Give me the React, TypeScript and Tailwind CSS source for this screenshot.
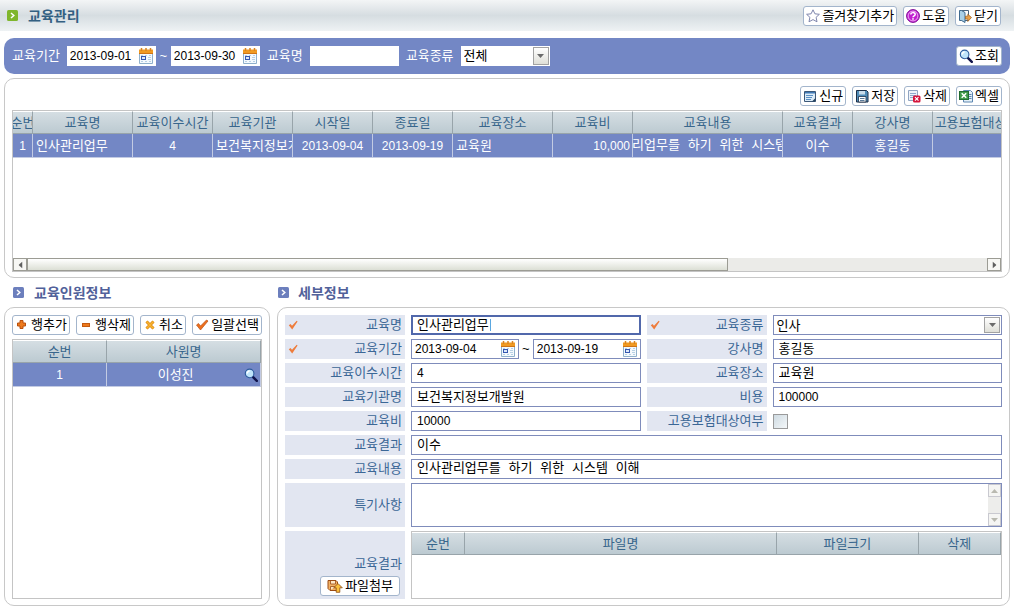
import React from "react";

type IconProps = { className?: string };

const StarIcon = () => (
  <svg viewBox="0 0 14 14" className="size-3.5 shrink-0">
    <path d="M7 .8 8.900 4.800l4.500.5-3.300 3 .9 4.500L7 10.600l-4 2.200.9-4.500-3.300-3 4.500-.5Z" fill="#fff" stroke="#7f86ad" />
  </svg>
);

const HelpIcon = () => (
  <svg viewBox="0 0 14 14" className="size-3.5 shrink-0">
    <circle cx="7" cy="7" r="6.400" fill="#c21fd0" stroke="#7d0f94" />
    <circle cx="7" cy="7" r="4.900" fill="none" stroke="#f3b9f7" strokeWidth=".9" />
    <path d="M4.800 5.600C4.800 3 9.300 3 9.200 5.400 9.200 6.900 7 6.800 7 8.300" fill="none" stroke="#fff" strokeWidth="1.500" />
    <rect x="6.200" y="9.200" width="1.600" height="1.500" fill="#fff" />
  </svg>
);

const CloseIcon = () => (
  <svg viewBox="0 0 14 14" className="size-3.5 shrink-0">
    <path d="M3.500 1.500h7v10h-7Z" fill="#fff" stroke="#49637f" />
    <path d="M1.500 1.500h2l3.500 2v10l-3.500-2h-2Z" fill="#a9d0e8" stroke="#3f6a8f" />
    <path d="M13.500 8.500 9.800 5.200v2H7.500v2.900h2.300v2.400Z" fill="#e8a04a" stroke="#9a5b1b" strokeWidth=".7" />
  </svg>
);

const SearchIcon = ({ className = "" }: IconProps) => (
  <svg viewBox="0 0 14 14" className={`size-3.5 shrink-0 ${className}`}>
    <path d="m8.600 8.600 4.200 4.200" stroke="#10134a" strokeWidth="2.400" strokeLinecap="round" />
    <circle cx="5.600" cy="5.400" r="4.300" fill="#bfe4fa" stroke="#2d5a9c" strokeWidth="1.100" />
    <path d="M3.200 5.400A2.400 2.400 0 0 1 5.600 3" stroke="#fff" strokeWidth="1.500" fill="none" />
  </svg>
);

const NewIcon = () => (
  <svg viewBox="0 0 14 14" className="size-3.5 shrink-0">
    <path d="M1.500 2.500h11v10h-11Z" fill="#dcecf8" stroke="#3c5878" />
    <path d="M2 3h10v1.500H2Z" fill="#3f78b4" />
    <path d="M3 6.500h7M3 8.500h6M3 10.500h5" stroke="#5b90c4" />
    <path d="m9 12.500 3.500-3.500v3.500Z" fill="#24425f" />
  </svg>
);

const SaveIcon = () => (
  <svg viewBox="0 0 14 14" className="size-3.5 shrink-0">
    <path d="M1.500 1.500h10l1.500 1.500v10H1.500Z" fill="#4f8cb8" stroke="#1c2f48" />
    <path d="M4 2h6v3.500H4Z" fill="#c9dcea" />
    <path d="M3.500 7.500h7.500v5.500H3.500Z" fill="#fff" stroke="#1c2f48" strokeWidth=".8" />
    <path d="M5 9.500h4.500M5 11.500h4.500" stroke="#5a7a98" />
  </svg>
);

const DeleteIcon = () => (
  <svg viewBox="0 0 14 14" className="size-3.5 shrink-0">
    <path d="M1.500 1.500h9v10h-9Z" fill="#eef3f9" stroke="#90a5c2" />
    <path d="M3 4.500h6M3 6.500h6M3 8.500h3" stroke="#8fa9cc" />
    <rect x="6" y="6.500" width="7.500" height="7" rx="1.500" fill="#d4143c" />
    <path d="m8 8.200 3.500 3.500m0-3.500L8 11.700" stroke="#fff" strokeWidth="1.200" />
  </svg>
);

const ExcelIcon = () => (
  <svg viewBox="0 0 14 14" className="size-3.5 shrink-0">
    <path d="M4.500 1.500h7l2 2v9.500h-9Z" fill="#e4f0f8" stroke="#5d86b0" />
    <path d="M10 5.500h2.500M10 7.500h2.500M10 9.500h2.500" stroke="#5d86b0" />
    <rect x=".5" y="2.500" width="9" height="8" fill="#3f9a4b" stroke="#1f6b30" />
    <path d="m2.700 4.300 4.500 4.500m0-4.500L2.700 8.800" stroke="#fff" strokeWidth="1.500" />
  </svg>
);

const PlusIcon = () => (
  <svg viewBox="0 0 14 14" className="size-3.5 shrink-0">
    <path d="M5 2.500h3V5h2.500v3H8v2.500H5V8H2.500V5H5Z" fill="#ee7a1c" stroke="#b84f0c" />
  </svg>
);

const MinusIcon = () => (
  <svg viewBox="0 0 14 14" className="size-3.5 shrink-0">
    <rect x="3.500" y="5.500" width="7" height="3" fill="#ee7a1c" stroke="#c45a10" />
  </svg>
);

const CancelIcon = () => (
  <svg viewBox="0 0 14 14" className="size-3.5 shrink-0">
    <path d="m3.500 3.500 7 7m0-7-7 7" stroke="#d98410" strokeWidth="3" />
    <path d="m3.500 3.500 7 7m0-7-7 7" stroke="#f9b531" strokeWidth="1.600" />
  </svg>
);

const CheckIcon = () => (
  <svg viewBox="0 0 14 14" className="size-3.5 shrink-0">
    <path d="m1.500 7 2-1.500 2 2.500L11.500 2l1.500 1L5.500 12Z" fill="#ee6f1c" stroke="#b84f14" strokeWidth=".7" />
  </svg>
);

const RequiredIcon = () => (
  <svg viewBox="0 0 10 10" className="size-2.5 shrink-0" aria-label="필수">
    <path d="m.8 5.200 1.700-1.200 1.500 1.800L8.700.8l.9.700L4.200 9.500Z" fill="#ee7c3c" />
  </svg>
);

const UploadIcon = () => (
  <svg viewBox="0 0 16 14" className="h-3.5 w-4 shrink-0">
    <path d="M1 1.500h8l1.500 1.500v8.500H3L1 9.500Z" fill="#f3b266" stroke="#9a4a14" />
    <path d="M3.500 2v3h5V2M3.500 11V7.500h5" fill="#fde6c4" stroke="#9a4a14" strokeWidth=".8" />
    <path d="m11 4.500 4.300 4.300h-2.500v4.500H9.200V8.800H6.700Z" fill="#fbbf3c" stroke="#8a4a10" strokeWidth=".8" />
  </svg>
);

const CalendarIcon = () => (
  <svg viewBox="0 0 16 16" className="size-4 shrink-0">
    <path d="M1.500 4.500h13v11h-13Z" fill="#f4f9fd" stroke="#8fb0cc" />
    <path d="M1 1.500h14V6H1Z" fill="#f09a22" />
    <path d="M1 5.500h14" stroke="#cf7414" />
    <path d="M3.500 0v3M8 0v3M12.500 0v3" stroke="#d9831f" strokeWidth="1.500" />
    <path d="M3 7.500h2M7 7.500h2M11 7.500h2M10 9.500h3M10 11.500h3M3 13.500h2M7 13.500h2M11 13.500h2" stroke="#b7d0e4" />
    <rect x="3.500" y="8.500" width="4" height="3" fill="#dce8fa" stroke="#3557b0" />
  </svg>
);

const Bullet = ({ className = "" }: IconProps) => (
  <svg viewBox="0 0 11 11" className={`size-[11px] shrink-0 ${className}`}>
    <rect width="11" height="11" rx="1.500" fill="currentColor" />
    <path d="m4 3 2.800 2.500L4 8" fill="none" stroke="#fff" strokeWidth="1.500" />
  </svg>
);

const Triangle = ({ className = "" }: IconProps) => (
  <svg viewBox="0 0 7 4" className={`h-1 w-[7px] shrink-0 ${className}`}>
    <path d="M0 0h7L3.500 4Z" fill="currentColor" />
  </svg>
);

const ToolButton = ({ icon, children, className = "px-0.5" }: { icon: React.ReactNode; children: React.ReactNode; className?: string }) => (
  <button
    type="button"
    className={`flex h-5 items-center gap-0.5 whitespace-nowrap rounded-[3px] border border-[#a3b5cc] bg-white text-black ${className}`}
  >
    {icon}
    {children}
  </button>
);

const DateField = ({ id, label, value, className = "" }: { id: string; label: string; value: string; className?: string }) => (
  <div className={`flex h-5 min-w-0 items-center bg-white pl-[3px] pr-0.5 ${className}`}>
    <input id={id} aria-label={label} defaultValue={value} className="w-full min-w-0 text-xs text-black outline-none" />
    <button type="button" aria-label="달력">
      <CalendarIcon />
    </button>
  </div>
);

const SelectField = ({ id, options, className = "" }: { id: string; options: string[]; className?: string }) => (
  <div className={`relative h-5 bg-white ${className}`}>
    <select id={id} className="block h-full w-full appearance-none pl-[3px] pr-5 text-black outline-none">
      {options.map((o) => (
        <option key={o}>{o}</option>
      ))}
    </select>
    <span className="pointer-events-none absolute inset-y-px right-px flex w-4 items-center justify-center border border-[#a2a2a2] bg-linear-to-b from-white to-[#dfdfd8] text-[#6b6b6b]">
      <Triangle />
    </span>
  </div>
);

const Label = ({ htmlFor, required, children }: { htmlFor: string; required?: boolean; children: React.ReactNode }) => (
  <div className="flex items-center bg-[#e2e6f1] pl-[3px] pr-[3px]">
    {required && <RequiredIcon />}
    <label htmlFor={htmlFor} className="ml-auto whitespace-nowrap text-[#3b6796]">
      {children}
    </label>
  </div>
);

const inputClass = "h-5 w-full min-w-0 border border-[#7f8cbb] bg-white pl-[5px] text-black outline-none";
const thClass =
  "h-[23px] overflow-hidden border-b border-r border-t border-b-[#98a4aa] border-r-[#98a4aa] border-t-white bg-linear-to-b from-[#d5dee3] to-[#bccad1] p-0 font-normal text-[#38668c]";
const tdClass = "h-6 overflow-hidden border-b border-r border-[#c3cbe3] bg-[#7387c5] p-0 text-white";

const courseColumns = [
  { title: "순번", width: "w-5", value: "1", cell: "justify-center text-xs" },
  { title: "교육명", width: "w-[100px]", value: "인사관리업무", cell: "px-[3px]" },
  { title: "교육이수시간", width: "w-[80px]", value: "4", cell: "justify-center text-xs" },
  { title: "교육기관", width: "w-[80px]", value: "보건복지정보개발원", cell: "px-[3px]" },
  { title: "시작일", width: "w-[80px]", value: "2013-09-04", cell: "justify-center text-xs" },
  { title: "종료일", width: "w-[80px]", value: "2013-09-19", cell: "justify-center text-xs" },
  { title: "교육장소", width: "w-[100px]", value: "교육원", cell: "px-[3px]" },
  { title: "교육비", width: "w-[80px]", value: "10,000", cell: "justify-end px-0.5 text-xs" },
  {
    title: "교육내용",
    width: "w-[150px]",
    value: "인사관리업무를 하기 위한 시스템 이해",
    cell: "justify-center font-['Liberation_Mono','Noto_Sans_CJK_KR',monospace]",
  },
  { title: "교육결과", width: "w-[70px]", value: "이수", cell: "justify-center" },
  { title: "강사명", width: "w-[80px]", value: "홍길동", cell: "justify-center" },
  { title: "고용보험대상여부", width: "w-[100px]", value: "", cell: "justify-center" },
];

const fileColumns = [
  { title: "순번", width: "w-[9%]" },
  { title: "파일명", width: "w-[53%]" },
  { title: "파일크기", width: "w-[24%]" },
  { title: "삭제", width: "w-[14%]" },
];

const Header = () => (
  <header className="flex h-[31px] items-center justify-between bg-linear-to-b from-[#f3f5f6] via-[#d6dde1] to-[#eef2f4] pl-[7px] pr-[13px]">
    <h1 className="flex items-center gap-2.5 text-sm font-bold text-[#336082]">
      <Bullet className="text-[#7fb62c]" />
      교육관리
    </h1>
    <div className="flex gap-1.5">
      <ToolButton icon={<StarIcon />}>즐겨찾기추가</ToolButton>
      <ToolButton icon={<HelpIcon />}>도움</ToolButton>
      <ToolButton icon={<CloseIcon />}>닫기</ToolButton>
    </div>
  </header>
);

const SearchBar = () => (
  <form className="flex h-9 items-center rounded-[10px] bg-[#7387c5] px-2 text-white">
    <label htmlFor="from" className="mr-[7px]">교육기간</label>
    <DateField id="from" label="교육기간 시작" value="2013-09-01" className="w-[89px]" />
    <span className="w-[15px] text-center">~</span>
    <DateField id="to" label="교육기간 종료" value="2013-09-30" className="w-[89px]" />
    <label htmlFor="name" className="mx-[7px]">교육명</label>
    <input id="name" className="h-5 w-[89px] bg-white px-1 text-black outline-none" />
    <label htmlFor="kind" className="mx-[7px]">교육종류</label>
    <SelectField id="kind" options={["전체", "인사"]} className="w-[89px]" />
    <div className="ml-auto">
      <ToolButton icon={<SearchIcon />}>조회</ToolButton>
    </div>
  </form>
);

const CourseList = () => (
  <section className="rounded-[10px] border border-[#c8c8c8] px-[7px] pb-[5px] pt-[7px]">
    <div className="mb-1 flex justify-end gap-1.5">
      <ToolButton icon={<NewIcon />}>신규</ToolButton>
      <ToolButton icon={<SaveIcon />}>저장</ToolButton>
      <ToolButton icon={<DeleteIcon />}>삭제</ToolButton>
      <ToolButton icon={<ExcelIcon />}>엑셀</ToolButton>
    </div>
    <div className="flex h-[162px] flex-col border border-[#c4c4c4]">
      <div className="flex-1 overflow-hidden">
        <table className="w-full min-w-[1020px] table-fixed border-separate border-spacing-0">
          <thead>
            <tr>
              {courseColumns.map((c) => (
                <th key={c.title} className={`${thClass} ${c.width}`}>
                  <div className="flex justify-center overflow-hidden whitespace-nowrap">{c.title}</div>
                </th>
              ))}
            </tr>
          </thead>
          <tbody>
            <tr>
              {courseColumns.map((c) => (
                <td key={c.title} className={tdClass}>
                  <div className={`flex overflow-hidden whitespace-nowrap ${c.cell}`}>{c.value}</div>
                </td>
              ))}
            </tr>
          </tbody>
        </table>
      </div>
      <div className="flex h-[13px] bg-[#ebebe8] text-[#5f5f5f]">
        <button type="button" aria-label="왼쪽" className="flex w-3.5 items-center justify-center border border-[#9c9c94] bg-[#f7f7f4]">
          <Triangle className="rotate-90" />
        </button>
        <div className="w-[71%] border border-[#9c9c94] bg-linear-to-b from-white to-[#dcdfd5]" />
        <button type="button" aria-label="오른쪽" className="ml-auto flex w-3.5 items-center justify-center border border-[#9c9c94] bg-[#f7f7f4]">
          <Triangle className="-rotate-90" />
        </button>
      </div>
    </div>
  </section>
);

const SectionTitle = ({ children, className = "" }: { children: React.ReactNode; className?: string }) => (
  <h2 className={`flex h-[29px] items-center text-sm font-bold text-[#51619a] ${className}`}>
    <Bullet className="text-[#6c7fbd]" />
    {children}
  </h2>
);

const Members = () => (
  <section className="flex w-[266px] shrink-0 flex-col">
    <SectionTitle className="gap-2.5 pl-[9px]">교육인원정보</SectionTitle>
    <div className="flex flex-1 flex-col rounded-[10px] border border-[#c8c8c8] px-[7px] pb-1.5 pt-[7px]">
      <div className="mb-1 flex justify-between">
        <ToolButton icon={<PlusIcon />}>행추가</ToolButton>
        <ToolButton icon={<MinusIcon />}>행삭제</ToolButton>
        <ToolButton icon={<CancelIcon />}>취소</ToolButton>
        <ToolButton icon={<CheckIcon />}>일괄선택</ToolButton>
      </div>
      <div className="flex-1 border border-[#c4c4c4]">
        <table className="w-full table-fixed border-separate border-spacing-0">
          <thead>
            <tr>
              <th className={`${thClass} w-[38%]`}>순번</th>
              <th className={thClass}>사원명</th>
            </tr>
          </thead>
          <tbody>
            <tr>
              <td className={`${tdClass} text-center text-xs`}>1</td>
              <td className={tdClass}>
                <div className="flex items-center pr-0.5">
                  <span className="flex-1 text-center">이성진</span>
                  <button type="button" aria-label="사원 검색">
                    <SearchIcon />
                  </button>
                </div>
              </td>
            </tr>
          </tbody>
        </table>
      </div>
    </div>
  </section>
);

const Details = () => (
  <section className="min-w-0 flex-1">
    <SectionTitle className="gap-[9px] pl-px">세부정보</SectionTitle>
    <form className="grid grid-cols-[120px_minmax(0,1fr)_120px_minmax(0,1fr)] gap-x-1.5 gap-y-1 rounded-[10px] border border-[#c8c8c8] px-[7px] pb-1.5 pt-[7px]">
      <Label htmlFor="d-name" required>교육명</Label>
      <div className="relative">
        <input
          id="d-name"
          defaultValue="인사관리업무"
          className="block h-5 w-full border-2 border-[#5168ab] bg-white pl-1 text-black outline-none"
        />
        <span className="absolute left-[79px] top-1 h-3 w-px bg-[#5aa7e0]" />
      </div>
      <Label htmlFor="d-kind" required>교육종류</Label>
      <SelectField id="d-kind" options={["인사", "전체"]} className="border border-[#7f8cbb]" />

      <Label htmlFor="d-from" required>교육기간</Label>
      <div className="flex">
        <DateField id="d-from" label="교육기간 시작" value="2013-09-04" className="flex-1 border border-[#7f8cbb]" />
        <span className="w-3.5 text-center">~</span>
        <DateField id="d-to" label="교육기간 종료" value="2013-09-19" className="flex-1 border border-[#7f8cbb]" />
      </div>
      <Label htmlFor="d-teacher">강사명</Label>
      <input id="d-teacher" defaultValue="홍길동" className={inputClass} />

      <Label htmlFor="d-hours">교육이수시간</Label>
      <input id="d-hours" defaultValue="4" className={`${inputClass} text-xs`} />
      <Label htmlFor="d-place">교육장소</Label>
      <input id="d-place" defaultValue="교육원" className={inputClass} />

      <Label htmlFor="d-org">교육기관명</Label>
      <input id="d-org" defaultValue="보건복지정보개발원" className={inputClass} />
      <Label htmlFor="d-cost">비용</Label>
      <input id="d-cost" defaultValue="100000" className={`${inputClass} text-xs`} />

      <Label htmlFor="d-fee">교육비</Label>
      <input id="d-fee" defaultValue="10000" className={`${inputClass} text-xs`} />
      <Label htmlFor="d-insured">고용보험대상여부</Label>
      <div className="flex items-center">
        <input
          id="d-insured"
          type="checkbox"
          className="size-[15px] appearance-none border border-[#9a9a9a] bg-linear-to-br from-[#cfdbe2] to-[#f4f7f9] checked:bg-[#7387c5]"
        />
      </div>

      <Label htmlFor="d-result">교육결과</Label>
      <div className="col-span-3 flex">
        <input id="d-result" defaultValue="이수" className={inputClass} />
      </div>

      <Label htmlFor="d-content">교육내용</Label>
      <div className="col-span-3 flex">
        <input
          id="d-content"
          defaultValue="인사관리업무를 하기 위한 시스템 이해"
          className={`${inputClass} font-['Liberation_Mono','Noto_Sans_CJK_KR',monospace]`}
        />
      </div>

      <Label htmlFor="d-note">특기사항</Label>
      <div className="col-span-3 flex h-11 border border-[#7f8cbb]">
        <textarea id="d-note" className="flex-1 resize-none px-[5px] text-black outline-none" />
        <div className="flex w-[13px] flex-col justify-between bg-[#ededeb] text-[#b9b9b0]">
          <button type="button" aria-label="위로" className="flex h-[13px] items-center justify-center border border-[#c9c9d0] bg-[#f5f5f3]">
            <Triangle className="rotate-180" />
          </button>
          <button type="button" aria-label="아래로" className="flex h-[13px] items-center justify-center border border-[#c9c9d0] bg-[#f5f5f3]">
            <Triangle />
          </button>
        </div>
      </div>

      <div className="flex flex-col items-end justify-end bg-[#e2e6f1] pb-[3px] pr-[3px]">
        <span className="text-[#3b6796]">교육결과</span>
        <div className="mr-0.5 mt-0.5">
          <ToolButton icon={<UploadIcon />} className="px-1.5">파일첨부</ToolButton>
        </div>
      </div>
      <div className="col-span-3 h-[68px] border border-[#c4c4c4]">
        <table className="w-full table-fixed border-separate border-spacing-0">
          <thead>
            <tr>
              {fileColumns.map((c) => (
                <th key={c.title} className={`${thClass} ${c.width}`}>
                  {c.title}
                </th>
              ))}
            </tr>
          </thead>
        </table>
      </div>
    </form>
  </section>
);

const App = () => {
  return (
    <div className="min-h-screen bg-white font-['Liberation_Sans','Noto_Sans_CJK_KR',sans-serif] text-[13px] leading-5 text-black">
      <Header />
      <main className="flex flex-col px-1 pt-[7px]">
        <SearchBar />
        <div className="mt-1">
          <CourseList />
        </div>
        <div className="flex gap-[7px]">
          <Members />
          <Details />
        </div>
      </main>
    </div>
  );
};

export default App;
